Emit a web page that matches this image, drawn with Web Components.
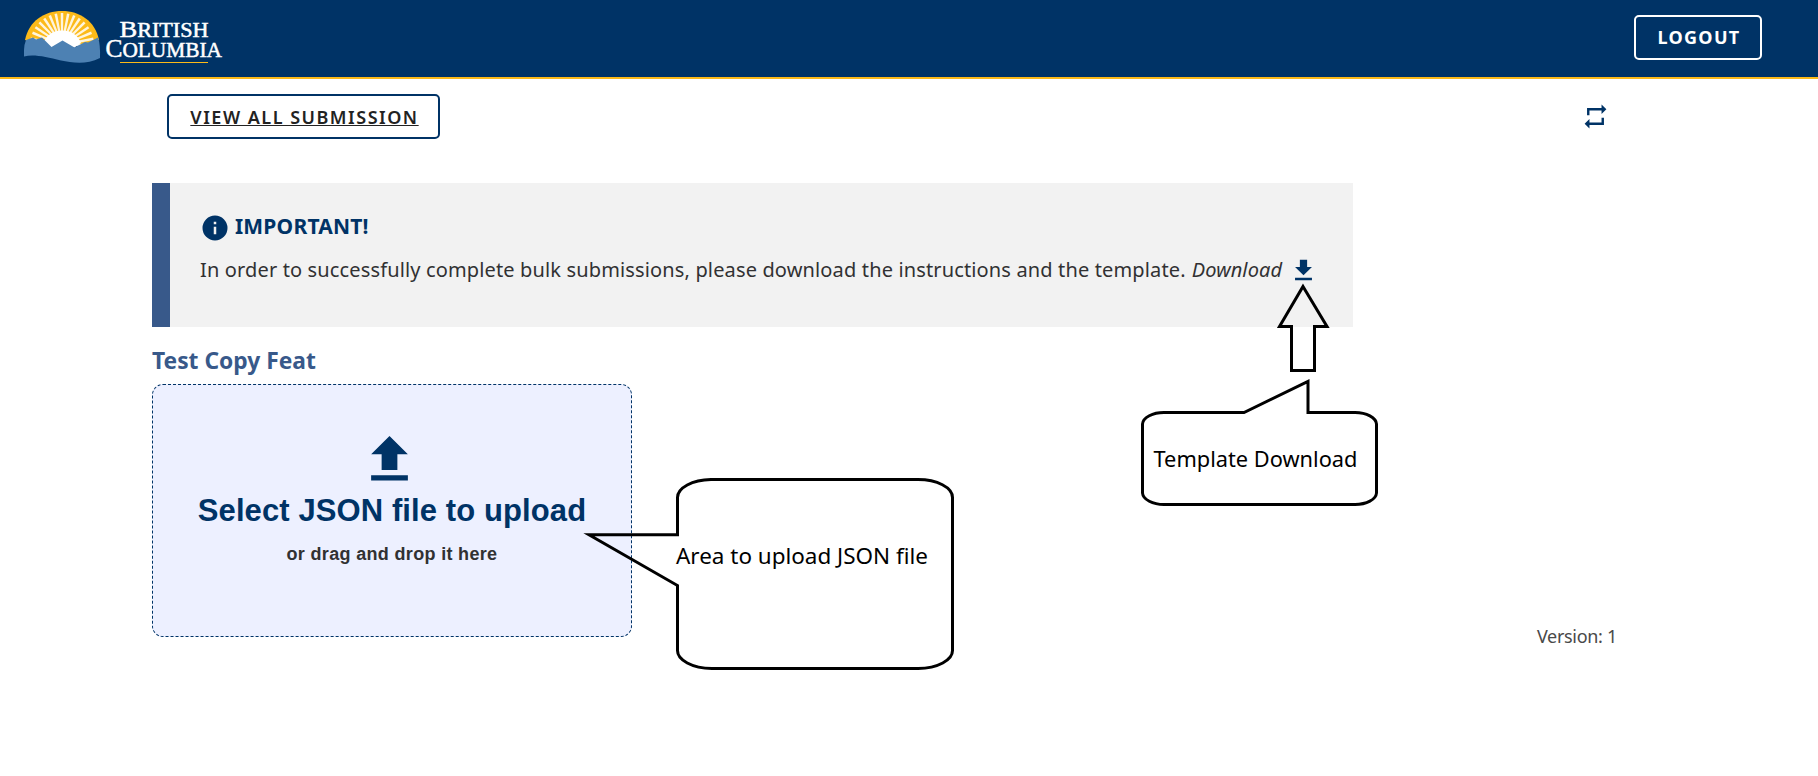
<!DOCTYPE html>
<html lang="en">
<head>
<meta charset="utf-8">
<title>Bulk submission</title>
<style>
html,body{margin:0;padding:0;background:#fff}
body{font-family:"Noto Sans",sans-serif;color:#313132;height:776px;overflow:hidden}
</style>
</head>
<body>
<bulk-page></bulk-page>
<script>
function define(name, html){
  const t=document.createElement('template');
  t.innerHTML=html;
  customElements.define(name, class extends HTMLElement{
    constructor(){super();this.attachShadow({mode:'open'}).append(t.content.cloneNode(true));}
  });
}

// Sun rays fan out from the horizon centre
let rays='';
for(let i=0;i<17;i++){
  const a=(180+i*11.25)*Math.PI/180, w=.04;
  const p=(r,d)=>(38+r*Math.cos(a+d)).toFixed(2)+','+(34+r*Math.sin(a+d)).toFixed(2);
  rays+=`<polygon fill="#fff" fill-opacity=".85" points="${p(12,-.09)} ${p(12,.09)} ${p(32,w)} ${p(32,-w)}"/>`;
}

define('bc-logo', `<style>:host{display:block;width:204px;height:60px}svg{display:block}</style>
<svg width="204" height="60" viewBox="0 0 204 60">
<path fill="#fcba19" d="M1 29C5 10 20 0 38 0S71 10 75 29L60 34H16Z"/>
${rays}
<path fill="#fff" d="M19 33C22 24 29 19.500 38 19.500S54 24 57 32L50 37H25Z"/>
<path fill="#4d81b3" d="M0 45.500V39Q.3 33 2 29L9 26.500 12 28.500 18 26.500 27.500 36 38.500 29.500 50.500 36.500 61 31 64 31.500 74 26.500Q76.500 34 76 47C62 54 48 51.500 37 49.500 22 46 10 43 0 45.500Z"/>
<g fill="#fff" font-family="Liberation Serif,serif" stroke="#fff" stroke-width=".5">
<text x="95.500" y="25.500" font-size="24" textLength="89" lengthAdjust="spacingAndGlyphs">B<tspan font-size="20">RITISH</tspan></text>
<text x="81.500" y="45.500" font-size="25" textLength="116.500" lengthAdjust="spacingAndGlyphs">C<tspan font-size="21">OLUMBIA</tspan></text>
</g><path fill="#fcba19" d="M96 51h88v1h-88z"/></svg>`);

define('app-header', `<style>
:host{display:flex;box-sizing:border-box;height:79px;background:#036;border-bottom:2px solid #fcba19;align-items:flex-start;justify-content:space-between;padding:11px 56px 0 24px}
app-button{margin-top:4px}</style>
<bc-logo></bc-logo><app-button style="--w:128px;--line:#fff;color:#fff;--ls:1.3px;--pl:2px;font-weight:700">LOGOUT</app-button>`);

define('app-button', `<style>
:host{display:flex;box-sizing:border-box;width:var(--w);height:45px;border:2px solid var(--line);border-radius:5px;align-items:center;justify-content:center;font-size:18px;line-height:25px}
span{letter-spacing:var(--ls);text-decoration:var(--deco,none);white-space:nowrap;padding:var(--pt,0) 0 0 var(--pl,0)}</style><span><slot></slot></span>`);

define('repeat-icon', `<style>:host{display:block}svg{display:block}</style>
<svg width="29" height="29" viewBox="0 0 24 24" fill="#036"><path d="M17 17H7V14L3 18L7 22V19H19V13H17M7 7H17V10L21 6L17 2V5H5V11H7V7Z"/></svg>`);
define('download-icon', `<style>:host{display:block}svg{display:block}</style>
<svg width="29" height="29" viewBox="0 0 24 24" fill="#036"><path d="M5 20H19V18H5M19 9H15V3H9V9H5L12 16L19 9Z"/></svg>`);
define('upload-icon', `<style>:host{display:block}svg{display:block}</style>
<svg width="63" height="63" viewBox="0 0 24 24" fill="#036"><path d="M9 16V10H5L12 3L19 10H15V16H9M5 20V18H19V20H5Z"/></svg>`);
define('info-icon', `<style>:host{display:block}svg{display:block}</style>
<svg width="30" height="30" viewBox="0 0 24 24" fill="#036"><path d="M13 9H11V7H13M13 17H11V11H13M12 2A10 10 0 0 0 2 12A10 10 0 0 0 12 22A10 10 0 0 0 22 12A10 10 0 0 0 12 2Z"/></svg>`);

define('app-toolbar', `<style>
:host{display:flex;justify-content:space-between;align-items:flex-start;padding:15px 208px 0 167px;height:89px}
repeat-icon{margin-top:8px}</style>
<app-button style="--w:273px;--line:#036;--ls:1.5px;--pt:2px;--pl:2px;--deco:underline;font-weight:600;color:#222">VIEW ALL SUBMISSION</app-button><repeat-icon></repeat-icon>`);

define('important-note', `<style>
:host{display:block;box-sizing:border-box;width:1201px;height:144px;margin-left:152px;background:#f2f2f2;border-left:18px solid #38598a;padding:30px 0 0 30px}
.row{display:flex;align-items:center;height:30px}
h2{margin:0 0 4px 5px;font-size:21px;line-height:28px;color:#036;letter-spacing:.2px}
p{margin:0;font-size:20px;line-height:28px;white-space:nowrap}
.text{margin-top:13px;height:28px}
.a{letter-spacing:.143px}.b{margin-left:6px;font-style:italic;letter-spacing:.1px}
download-icon{margin-left:6.500px}</style>
<div class="row"><info-icon></info-icon><h2>IMPORTANT!</h2></div>
<div class="row text"><p class="a">In order to successfully complete bulk submissions, please download the instructions and the template.</p><p class="b">Download</p><download-icon></download-icon></div>`);

define('drop-zone', `<style>
:host{display:flex;flex-direction:column;align-items:center;box-sizing:border-box;width:480px;height:253px;border:1px dashed #036;border-radius:11px;background:#edf0ff;padding-top:43px;font-family:"Liberation Sans",sans-serif;font-weight:700}
upload-icon{margin-right:5px}
h1{margin:2px 0 0;font-size:31px;line-height:36px;letter-spacing:.1px;color:#036;white-space:nowrap}
p{margin:13px 0 0;font-size:18px;line-height:24px;letter-spacing:.33px;white-space:nowrap}</style>
<upload-icon></upload-icon><h1>Select JSON file to upload</h1><p>or drag and drop it here</p>`);

define('upload-section', `<style>
:host{display:flex;justify-content:space-between;align-items:flex-end;padding:18px 201px 0 152px}
h3{margin:0 0 7px;font-size:22.800px;line-height:32px;color:#38598a}
.v{font-size:18px;line-height:24px;color:#494949;letter-spacing:-.3px;margin-bottom:-11px}</style>
<div><h3>Test Copy Feat</h3><drop-zone></drop-zone></div><div class="v">Version: 1</div>`);

// Callouts drawn over the page
define('page-annotations', `<style>:host{position:absolute;left:0;top:0;pointer-events:none}svg{display:block}</style>
<svg width="1818" height="776" fill="none" stroke="#000" stroke-width="3">
<path d="M1303 286.500L1327 326.500H1314.500V370.500H1291.500V326.500H1279.500Z"/>
<path d="M1164.500 412.500H1244L1308 381.500V412.500H1355A21.500 12 0 0 1 1376.500 424V493A21.500 12 0 0 1 1355 504.500H1164.500A21.500 12 0 0 1 1142.500 493V424A21.500 12 0 0 1 1164.500 412.500Z"/>
<path stroke-miterlimit="10" d="M711 479.500H918A34.500 18 0 0 1 952.500 497.500V650A34.500 18 0 0 1 918 668.500H712A34.500 18 0 0 1 677.500 650V585.500L589 534.700H677.500V497.500A34.500 18 0 0 1 711 479.500Z"/>
<g fill="#000" stroke="none" font-size="22" font-family="Noto Sans,sans-serif">
<text x="1153.500" y="466.500" textLength="204" lengthAdjust="spacingAndGlyphs">Template Download</text>
<text x="676" y="563.500" textLength="252" lengthAdjust="spacingAndGlyphs">Area to upload JSON file</text></g></svg>`);

define('bulk-page', `<style>:host{display:block;position:relative;width:1818px;height:776px}</style>
<app-header></app-header><app-toolbar></app-toolbar><important-note></important-note><upload-section></upload-section><page-annotations></page-annotations>`);
</script>
</body>
</html>
